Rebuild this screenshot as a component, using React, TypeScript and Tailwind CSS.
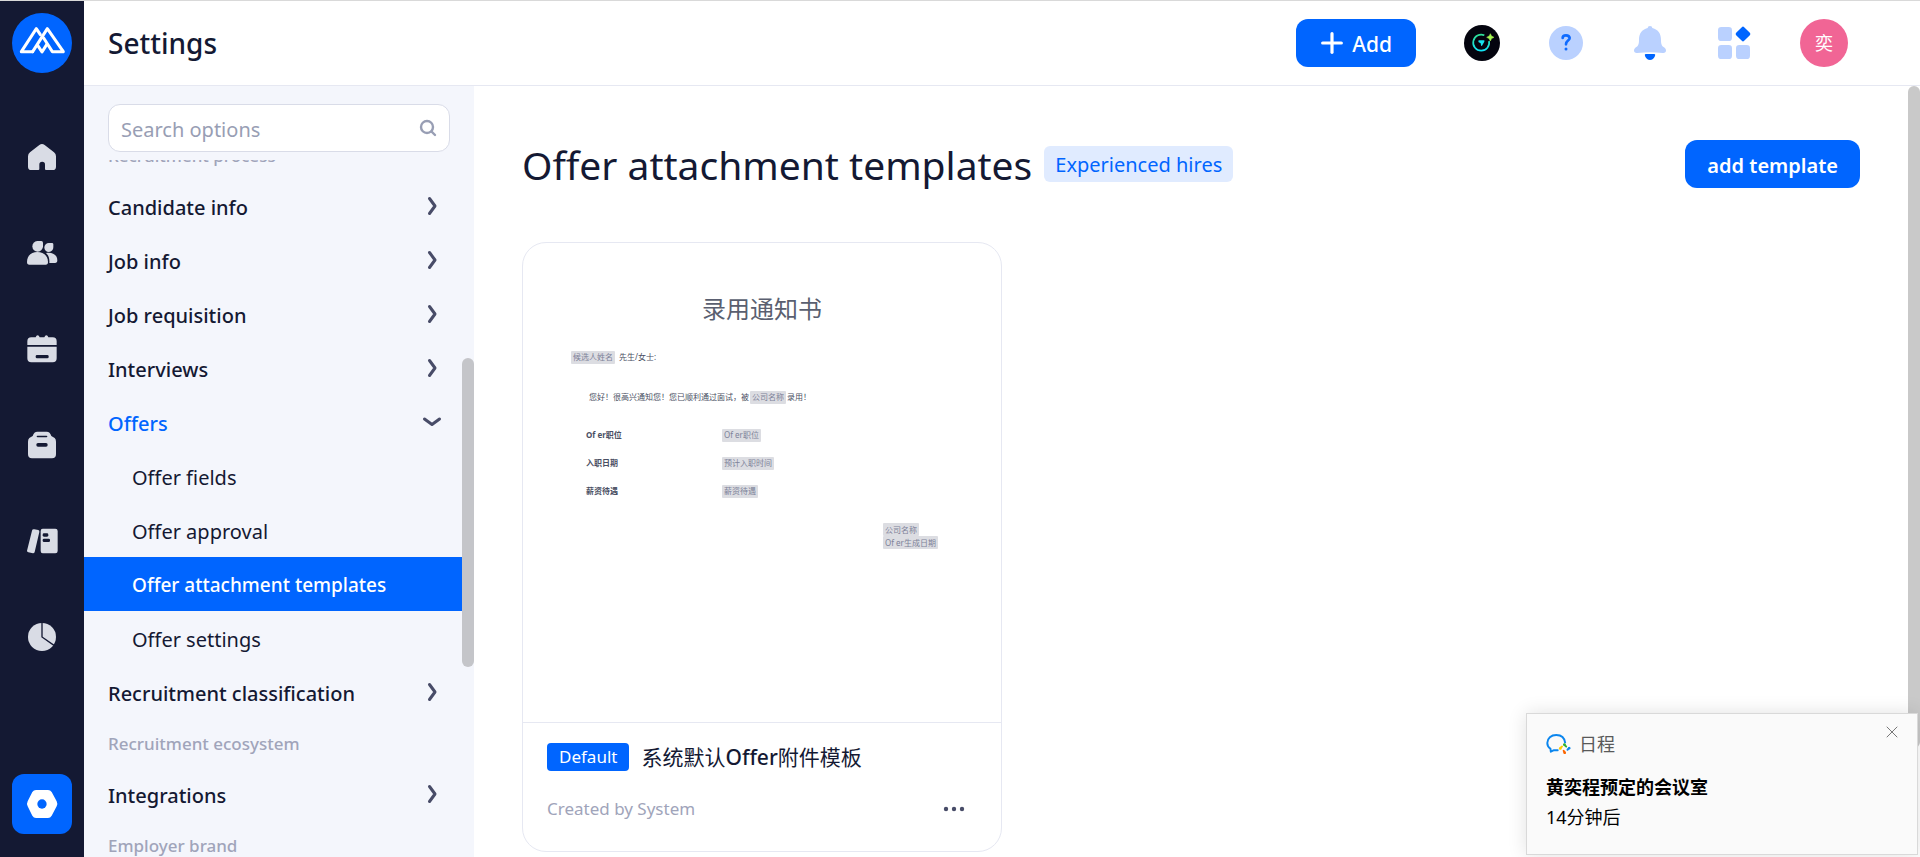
import React, { useState } from 'react';
import { Plus, X } from 'lucide-react';
import clsx from 'clsx';

type MenuItem = {
    label: string;
    kind: 'group' | 'item' | 'child';
    open?: boolean;
};

const MENU: MenuItem[] = [
    { label: 'Recruitment process', kind: 'group' },
    { label: 'Candidate info', kind: 'item' },
    { label: 'Job info', kind: 'item' },
    { label: 'Job requisition', kind: 'item' },
    { label: 'Interviews', kind: 'item' },
    { label: 'Offers', kind: 'item', open: true },
    { label: 'Offer fields', kind: 'child' },
    { label: 'Offer approval', kind: 'child' },
    { label: 'Offer attachment templates', kind: 'child' },
    { label: 'Offer settings', kind: 'child' },
    { label: 'Recruitment classification', kind: 'item' },
    { label: 'Recruitment ecosystem', kind: 'group' },
    { label: 'Integrations', kind: 'item' },
    { label: 'Employer brand', kind: 'group' },
];

const RAIL = [
    { label: 'Home', Icon: HomeIcon },
    { label: 'Candidates', Icon: UsersIcon },
    { label: 'Calendar', Icon: CalendarIcon },
    { label: 'Jobs', Icon: BagIcon },
    { label: 'Library', Icon: BooksIcon },
    { label: 'Reports', Icon: PieIcon },
];

const OFFER_ROWS = [
    { name: 'Of er职位', value: 'Of er职位' },
    { name: '入职日期', value: '预计入职时间' },
    { name: '薪资待遇', value: '薪资待遇' },
];

export default function App() {
    return (
        <div className="relative flex h-screen overflow-hidden border-t border-[#d9d9d9] bg-white font-['Noto_Sans','Noto_Sans_CJK_SC',sans-serif] text-[#141933]">
            <Rail />
            <div className="flex min-w-0 flex-1 flex-col">
                <Header />
                <div className="relative flex min-h-0 flex-1">
                    <Sidebar />
                    <Content />
                    <div className="w-3 flex-none">
                        <div className="h-[662px] rounded-full bg-[#c9c9c9]" />
                    </div>
                    <Watermark />
                </div>
            </div>
            <Toast />
        </div>
    );
}

function Rail() {
    return (
        <nav className="flex w-21 flex-none flex-col items-center bg-[#141933] pt-3 pb-[23px]">
            <a href="#home" aria-label="Moka">
                <Logo />
            </a>
            <div className="mt-9 flex flex-col">
                {RAIL.map(({ label, Icon }) => (
                    <a key={label} href="#nav" aria-label={label} className="flex h-24 items-center text-[#d9dce5]">
                        <Icon />
                    </a>
                ))}
            </div>
            <a href="#settings" aria-label="Settings" className="mt-auto flex h-15 w-15 items-center justify-center rounded-xl bg-[#0065ff] text-white">
                <NutIcon />
            </a>
        </nav>
    );
}

function Header() {
    return (
        <header className="flex h-[85px] flex-none items-center gap-12 border-b border-[#e6e8f2] pr-18 pl-6">
            <h1 className="mr-auto text-[28px] font-medium">Settings</h1>
            <button type="button" className="flex h-12 items-center gap-1 rounded-xl bg-[#0065ff] pr-6 pl-5 text-[21px] font-medium text-white">
                <Plus size={32} strokeWidth={2.4} />
                <span className="pt-[3px]">Add</span>
            </button>
            <button type="button" aria-label="Assistant"><AssistantIcon /></button>
            <button type="button" aria-label="Help"><HelpIcon /></button>
            <button type="button" aria-label="Notifications"><BellIcon /></button>
            <button type="button" aria-label="Apps"><AppsIcon /></button>
            <button type="button" className="flex h-12 w-12 items-center justify-center rounded-full bg-[#f16595] text-lg text-white">
                奕
            </button>
        </header>
    );
}

function Sidebar() {
    const [active, setActive] = useState('Offer attachment templates');

    return (
        <aside className="flex w-[390px] flex-none flex-col bg-[#f4f6fc]">
            <div className="flex-none px-6 pt-[18px] pb-2">
                <label className="flex h-12 items-center rounded-xl border border-[#d9dce8] bg-white px-3">
                    <input
                        type="text"
                        aria-label="Search options"
                        placeholder="Search options"
                        className="min-w-0 flex-1 bg-transparent pt-[3px] text-xl outline-none placeholder:text-[#989eb4]"
                    />
                    <SearchIcon />
                </label>
            </div>
            <div className="flex min-h-0 flex-1 overflow-hidden">
                <div className="-mt-[29px] flex min-w-0 flex-1 flex-col">
                    {MENU.map((item) => {
                        if (item.kind === 'group') {
                            return (
                                <div key={item.label} className="flex h-12 flex-none items-center pt-0.5 pl-6 text-[17px] font-medium text-[#a0a4ba]">
                                    {item.label}
                                </div>
                            );
                        }
                        return (
                            <button
                                key={item.label}
                                type="button"
                                onClick={() => item.kind === 'child' && setActive(item.label)}
                                className={clsx(
                                    'flex h-[54px] flex-none items-center justify-between pr-5 text-left',
                                    item.kind === 'child' ? 'pl-12' : 'pl-6 font-medium',
                                    item.open && 'text-[#0065ff]',
                                    active === item.label ? 'bg-[#0065ff] text-[19px] font-medium text-white' : 'text-xl'
                                )}
                            >
                                <span className="pt-[3px]">{item.label}</span>
                                {item.kind === 'item' && <Chevron open={item.open} />}
                            </button>
                        );
                    })}
                </div>
                <div className="w-3 flex-none pt-[198px]">
                    <div className="h-[309px] rounded-full bg-[#c4c5c9]" />
                </div>
            </div>
        </aside>
    );
}

function Content() {
    return (
        <main className="min-w-0 flex-1 overflow-hidden pt-[54px] pr-12 pl-12">
            <div className="flex h-12 items-center">
                <h2 className="pt-[3px] text-[39px] whitespace-nowrap">Offer attachment templates</h2>
                <span className="ml-3 flex h-9 items-center rounded-md bg-[#e0ebff] px-[11px] pt-0.5 text-xl whitespace-nowrap text-[#0065ff]">
                    Experienced hires
                </span>
                <button type="button" className="ml-auto h-12 rounded-xl bg-[#0065ff] px-[22px] pt-[3px] text-xl font-semibold text-white">
                    add template
                </button>
            </div>
            <TemplateCard />
        </main>
    );
}

function TemplateCard() {
    return (
        <article className="mt-[54px] w-[480px] rounded-3xl border border-[#e6e8f2]">
            <div className="h-[480px] border-b border-[#e6e8f2] px-12 pt-12 text-[8px] text-[#4a4f63]">
                <h3 className="text-center text-2xl leading-9 text-[#5a5f70]">录用通知书</h3>
                <p className="mt-[22px] flex h-4 items-center gap-1">
                    <Field>候选人姓名</Field>先生/女士:
                </p>
                <p className="mt-6 flex h-4 items-center gap-px pl-[18px]">
                    您好！很高兴通知您！您已顺利通过面试，被<Field>公司名称</Field>录用！
                </p>
                <table className="mt-4 ml-[15px]">
                    <tbody>
                        {OFFER_ROWS.map((row) => (
                            <tr key={row.name} className="h-7">
                                <th className="w-[136px] text-left font-bold">{row.name}</th>
                                <td><Field>{row.value}</Field></td>
                            </tr>
                        ))}
                    </tbody>
                </table>
                <div className="mt-[18px] ml-[312px] flex flex-col items-start">
                    <Field>公司名称</Field>
                    <Field>Of er生成日期</Field>
                </div>
            </div>
            <div className="px-6 pt-[18px] pb-[26px]">
                <div className="flex h-8 items-center gap-3">
                    <span className="flex h-7 items-center rounded bg-[#0065ff] px-3 text-[17px] text-white">Default</span>
                    <h3 className="pt-0.5 text-[21px]">
                        系统默认<span className="font-medium">Offer</span>附件模板
                    </h3>
                </div>
                <div className="mt-5 flex h-8 items-center justify-between pr-3">
                    <span className="text-[17px] text-[#a0a4ba]">Created by System</span>
                    <button type="button" aria-label="More actions">
                        <svg width="22" height="6" viewBox="0 0 22 6" fill="#484c68">
                            <circle cx="3" cy="3" r="2.2" />
                            <circle cx="11" cy="3" r="2.2" />
                            <circle cx="19" cy="3" r="2.2" />
                        </svg>
                    </button>
                </div>
            </div>
        </article>
    );
}

function Field({ children }: { children: React.ReactNode }) {
    return <span className="inline-flex h-[13px] items-center rounded-[1px] bg-[#dcdde2] px-0.5 text-[8px] text-[#7d8299]">{children}</span>;
}

function Toast() {
    return (
        <section className="absolute right-0.5 bottom-0.5 w-[392px] border border-[#d9d9d9] bg-[#fafafa] px-[19px] pt-3.5 pb-[22px] text-lg shadow-[0_0_18px_rgba(0,0,0,0.12)]">
            <div className="flex h-8 items-center gap-2 text-[#595959]">
                <WeComIcon />
                日程
                <button type="button" aria-label="Close" className="-mt-6 -mr-1 ml-auto text-[#777]">
                    <X size={20} strokeWidth={1.2} />
                </button>
            </div>
            <p className="mt-3 leading-[30px] font-bold text-black">黄奕程预定的会议室</p>
            <p className="leading-[30px] text-black">14分钟后</p>
        </section>
    );
}

// Tiled "name + time + account" mark laid over the whole work area
function Watermark() {
    return (
        <div aria-hidden="true" className="pointer-events-none absolute inset-x-0 top-[66px] bottom-0 overflow-hidden text-xl leading-[26px] text-black/[0.02]">
            <div className="grid grid-cols-[repeat(6,308px)]">
                {Array.from({ length: 30 }, (_, i) => (
                    <div key={i} className="flex h-[150px] items-center pl-1">
                        <div className="w-[212px] -rotate-30 text-center whitespace-nowrap">
                            奕程 2023-11-09 14:05
                            <br />
                            huangyicheng
                        </div>
                    </div>
                ))}
            </div>
        </div>
    );
}

function Chevron({ open }: { open?: boolean }) {
    return (
        <svg width="20" height="20" viewBox="0 0 20 20" fill="none" stroke="#484c68" strokeWidth="3" strokeLinecap="round" strokeLinejoin="round">
            <path d={open ? 'M2.5 7 10 12.5 17.5 7' : 'M7.5 2.5 13 10 7.5 17.5'} />
        </svg>
    );
}

function SearchIcon() {
    return (
        <svg width="18" height="18" viewBox="0 0 18 18" fill="none" stroke="#989eb4" strokeWidth="2.4" strokeLinecap="round">
            <circle cx="8" cy="8" r="6" />
            <path d="m12.5 12.5 3.5 3.5" />
        </svg>
    );
}

function Logo() {
    return (
        <svg width="60" height="60" viewBox="36 39 180 180">
            <circle cx="126" cy="129" r="90" fill="#0065ff" />
            <g fill="none" stroke="#fff" strokeWidth="9" strokeLinejoin="round" strokeLinecap="round">
                <path d="M98 155H64L109 86 121 104" />
                <path d="M98 155 142 86 190 155H157L131 114" />
                <path d="M113 136 126 156 140 134" />
            </g>
        </svg>
    );
}

function HomeIcon() {
    return (
        <svg width="32" height="32" viewBox="78 423 96 96" fill="currentColor">
            <path d="M118 435q8-6 16 0l28 22q6 5 6 12v31q0 10-10 10h-20q-3 0-3-3v-13a8.500 8.500 0 0 0-17 0v13q0 3-3 3H94q-10 0-10-10v-31q0-7 6-12z" />
        </svg>
    );
}

function UsersIcon() {
    return (
        <svg width="32" height="32" viewBox="78 108 96 96" fill="currentColor">
            <path d="M112 120h12q5 0 5 5v11a16 16 0 1 1-17-16z" />
            <path d="M81 183c0-20 14-30 31-30s32 10 32 30q0 8-7 8H88q-7 0-7-8z" />
            <path d="M147 126h9q4 0 4 4v9a13.500 13.500 0 1 1-13-13z" />
            <path d="M138 156c20-4 34 6 34 22q0 8-7 8h-17c1-13-2-23-10-30z" />
        </svg>
    );
}

function CalendarIcon() {
    return (
        <svg width="32" height="32" viewBox="78 398 96 96">
            <path fill="currentColor" d="M94 411h13q2-6 6-6t6 6h14q2-6 6-6t6 6h13q12 0 12 12v11H82v-11q0-12 12-12zM82 439h88v35q0 12-12 12H94q-12 0-12-12z" />
            <rect x="107" y="464" width="39" height="10" rx="4" fill="#141933" />
        </svg>
    );
}

function BagIcon() {
    return (
        <svg width="32" height="32" viewBox="78 26 96 96">
            <path fill="currentColor" d="M112 34h28q10 0 14 13l10 6q4 4 4 11v38q0 12-12 12H96q-12 0-12-12V64q0-7 4-11l10-6q4-13 14-13z" />
            <rect x="110" y="46" width="32" height="5" rx="2.500" fill="#141933" />
            <rect x="109" y="68" width="34" height="11" rx="5" fill="#141933" />
        </svg>
    );
}

function BooksIcon() {
    return (
        <svg width="32" height="32" viewBox="78 314 96 96">
            <path fill="currentColor" d="M103 327l12 2q4 1 3 6l-14 60q-1 4-5 4l-14-3q-4-1-4-5l15-60q1-5 7-4zM128 325h38q7 0 7 7v60q0 7-7 7h-38q-6 0-6-7v-60q0-7 6-7z" />
            <rect x="128" y="339" width="17" height="10" rx="4" fill="#141933" />
            <rect x="128" y="355" width="22" height="10" rx="4" fill="#141933" />
        </svg>
    );
}

function PieIcon() {
    return (
        <svg width="32" height="32" viewBox="78 602 96 96">
            <circle cx="126" cy="650" r="42" fill="currentColor" />
            <path d="M126 606v44l36 25" fill="none" stroke="#141933" strokeWidth="4" />
        </svg>
    );
}

function NutIcon() {
    return (
        <svg width="32" height="32" viewBox="78 444 96 96">
            <path fill="currentColor" d="M108 450h36q7 0 11 6l15 28q4 8 0 15l-15 28q-4 7-11 7h-36q-7 0-11-7l-14-28q-4-7 0-15l14-28q4-6 11-6z" />
            <circle cx="126" cy="492" r="14" fill="#0065ff" />
        </svg>
    );
}

function AssistantIcon() {
    return (
        <svg width="36" height="36" viewBox="522 75 108 108">
            <defs>
                <linearGradient id="ring" x1="0" y1="0" x2="0" y2="1">
                    <stop offset="0" stopColor="#2fdf96" />
                    <stop offset="1" stopColor="#12e4f5" />
                </linearGradient>
            </defs>
            <circle cx="576" cy="129" r="54" fill="#04040e" />
            <path d="M583 106a24 24 0 1 0 14 17" fill="none" stroke="url(#ring)" strokeWidth="5" />
            <path d="M565 124q-1-3 3-3h13q4 0 2 4l-7 12q-2 3-3-1l-1-6-6-3z" fill="#16e3ee" />
            <path d="M601 101q2 9 11 11-9 2-11 11-2-9-11-11 9-2 11-11z" fill="#a5f552" stroke="#a5f552" strokeWidth="1.500" />
        </svg>
    );
}

function HelpIcon() {
    return (
        <svg width="36" height="36" viewBox="774 77 108 108">
            <circle cx="828" cy="131" r="51" fill="#bad1ff" />
            <path d="M818 116q0-8 10-8t11 8c0 8-11 8-11 19" fill="none" stroke="#0f6bff" strokeWidth="8" strokeLinecap="round" />
            <circle cx="828" cy="149" r="4.500" fill="#0f6bff" />
        </svg>
    );
}

function BellIcon() {
    return (
        <svg width="36" height="36" viewBox="156 75 108 108">
            <path fill="#bad1ff" d="M203 84q0-6 7-6t7 6c18 5 26 17 26 36 0 12 2 19 11 23q4 3 4 8 0 9-10 8-38-5-76 0-10 1-10-8 0-5 4-8c9-4 11-11 11-23 0-19 8-31 26-36z" />
            <path fill="#0065ff" d="M197 162h26q4 0 2 6-5 12-15 12t-15-12q-2-6 2-6z" />
        </svg>
    );
}

function AppsIcon() {
    return (
        <svg width="36" height="36" viewBox="408 75 108 108">
            <g fill="#bad1ff">
                <rect x="414" y="81" width="42" height="42" rx="10" />
                <rect x="414" y="135" width="42" height="42" rx="10" />
                <rect x="468" y="135" width="42" height="42" rx="10" />
            </g>
            <rect x="472" y="85" width="34" height="34" rx="5" fill="#0065ff" transform="rotate(45 489 102)" />
        </svg>
    );
}

function WeComIcon() {
    return (
        <svg width="25" height="22" viewBox="136 124 78 66" fill="none">
            <path d="M196 154c-2-16-13-25-28-25-16 0-28 10-28 25 0 8 4 14 10 18l1 9 10-5q8 1 14 0" stroke="#0b86ee" strokeWidth="6" strokeLinejoin="round" />
            <g strokeWidth="6" strokeLinecap="round">
                <path d="m192 159 7 6" stroke="#34b233" />
                <path d="m209 169-6 6" stroke="#0b86ee" />
                <path d="m195 185-4-7" stroke="#fb6500" />
                <path d="m179 171 7-6" stroke="#ffcc00" />
            </g>
            <g>
                <circle cx="194" cy="159" r="4" fill="#34b233" />
                <circle cx="208" cy="170" r="4" fill="#0b86ee" />
                <circle cx="194" cy="184" r="4" fill="#fb6500" />
                <circle cx="181" cy="171" r="4" fill="#ffcc00" />
            </g>
        </svg>
    );
}
